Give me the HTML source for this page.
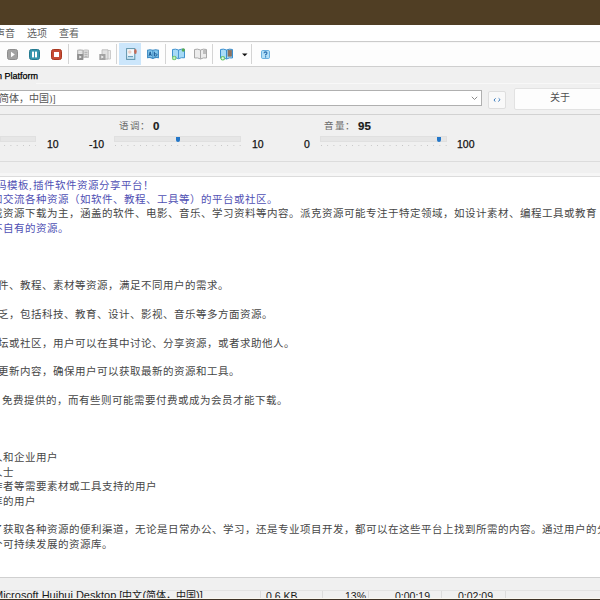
<!DOCTYPE html>
<html lang="zh-CN">
<head>
<meta charset="utf-8">
<style>
html,body{margin:0;padding:0;}
body{width:600px;height:600px;overflow:hidden;position:relative;background:#f0f0f0;font-family:"Liberation Sans",sans-serif;}
.a{position:absolute;}
#brown{left:0;top:0;width:600px;height:25px;background:#503e24;}
#menu{left:0;top:25px;width:600px;height:16px;background:#fff;}
.mi{position:absolute;top:2.5px;font-size:10px;line-height:12px;color:#606060;}
#tool{left:0;top:41px;width:600px;height:25px;background:#fdfdfd;border-bottom:1px solid #cfcfcf;}
.sep{position:absolute;top:3px;width:1px;height:20px;background:#d4d4d4;}
.ic{position:absolute;}
#tabrow{left:0;top:67px;width:600px;height:23px;background:#f0f0f0;}
#combo{left:-5px;top:90px;width:485px;height:14px;background:#fff;border:1px solid #b0b0b0;}
#ctrl{left:0;top:106px;width:600px;height:8px;background:#f0f0f0;border-bottom:1px solid #d2d2d2;}
.num{position:absolute;font-size:10.5px;line-height:12px;color:#111;-webkit-text-stroke:0.25px #111;}
.lbl{position:absolute;font-family:"Liberation Serif",serif;font-size:9.5px;letter-spacing:0.5px;line-height:12px;color:#6a6a6a;}
.bold{font-weight:bold;color:#1a1a1a;font-size:11.5px;-webkit-text-stroke:0.2px #1a1a1a;}
.track{position:absolute;top:136px;height:6px;background:#e6e6e6;box-shadow:inset 0 0 0 1px #e0e0e0;}
.ticks{position:absolute;top:145px;height:1px;background-image:linear-gradient(90deg,#c4c4c4 1px,transparent 1px);background-size:6.24px 1px;}
.thumb{position:absolute;top:137px;width:4px;height:5px;background:#2376c8;border-radius:0 0 2px 2px;}
#text{left:0;top:176px;width:600px;height:400px;background:#fff;border-top:1px solid #dcdcdc;}
.ln{position:absolute;font-family:"Liberation Serif",serif;font-size:10.5px;letter-spacing:1px;line-height:14px;white-space:pre;color:#464646;}
.b{color:#5050b4;}
#status{left:0;top:577px;width:600px;height:23px;background:#f0f0f0;border-top:1px solid #d0d0d0;}
.st{position:absolute;top:11px;font-size:10.5px;line-height:14px;color:#1a1a1a;white-space:pre;}
.ssep{position:absolute;top:13px;width:1px;height:8px;background:#dcdcdc;}
</style>
</head>
<body>
<div id="brown" class="a"></div>
<div id="menu" class="a">
  <div class="mi" style="left:-5px">声音</div>
  <div class="mi" style="left:27px">选项</div>
  <div class="mi" style="left:59px">查看</div>
</div>
<div id="tool" class="a">
  <!-- play -->
  <svg class="ic" style="left:7px;top:7.5px" width="11" height="11"><rect x="0.5" y="0.5" width="10" height="10" rx="2" fill="#a3a3a3" stroke="#8e8e8e"/><path d="M4 2.8 L7.8 5.5 L4 8.2Z" fill="#fff"/></svg>
  <!-- pause -->
  <svg class="ic" style="left:29px;top:7.5px" width="11" height="11"><rect x="0.5" y="0.5" width="10" height="10" rx="2" fill="#3595ad" stroke="#247a90"/><rect x="3" y="2.6" width="2" height="5.8" fill="#fff"/><rect x="6" y="2.6" width="2" height="5.8" fill="#fff"/></svg>
  <!-- stop -->
  <svg class="ic" style="left:51px;top:7.5px" width="11" height="11"><rect x="0.5" y="0.5" width="10" height="10" rx="2" fill="#c74a33" stroke="#a8371f"/><rect x="3" y="3" width="5" height="5" fill="#fff"/></svg>
  <div class="sep" style="left:68px"></div>
  <!-- doc play icons (gray) -->
  <svg class="ic" style="left:77px;top:8px" width="12" height="11"><path d="M6.5 1.2 Q9 0.6 11.5 1.2 V8.5 H6.5Z" fill="#dedede" stroke="#b4b4b4" stroke-width="0.8"/><path d="M7.5 3.3h3M7.5 5.3h3M7.5 7.3h3" stroke="#a5a5a5" stroke-width="0.9"/><path d="M0.5 1.2 Q3 0.5 6 1.2 V10.5 H0.5Z" fill="#d4d4d4" stroke="#a9a9a9" stroke-width="0.8"/><path d="M1.8 2.8h3M1.8 4.3h3" stroke="#f4f4f4" stroke-width="0.8"/><rect x="0.2" y="5" width="6" height="6" fill="#8f8f8f"/><path d="M2.3 6.4 L4.9 8 L2.3 9.6Z" fill="#f2f2f2"/></svg>
  <svg class="ic" style="left:99px;top:8px" width="12" height="11"><path d="M5.5 1.5 H11.5 V10 H5.5Z" fill="#ececec" stroke="#c2c2c2" stroke-width="0.8"/><path d="M3 0.8 H9 V10 H3Z" fill="#e2e2e2" stroke="#b6b6b6" stroke-width="0.8"/><rect x="0.3" y="5" width="6.2" height="6" fill="#a3a3a3"/><path d="M2.3 6.4 L4.9 8 L2.3 9.6Z" fill="#f4f4f4"/></svg>
  <div class="sep" style="left:116px"></div>
  <!-- highlighted button -->
  <div class="ic" style="left:119px;top:2px;width:22px;height:22px;background:#cce6fb;"></div>
  <svg class="ic" style="left:126px;top:7px" width="12" height="12"><defs><linearGradient id="dg" x1="0" y1="0" x2="0" y2="1"><stop offset="0" stop-color="#fbfdff"/><stop offset="0.55" stop-color="#eef6fb"/><stop offset="1" stop-color="#bfe2f5"/></linearGradient></defs><rect x="0.6" y="0.6" width="8.2" height="10.8" fill="url(#dg)" stroke="#5f93aa" stroke-width="1"/><circle cx="3.8" cy="4" r="1.7" fill="#ead0c6"/><path d="M2 8.6h5" stroke="#6b9fbd" stroke-width="1.2"/><ellipse cx="9.4" cy="3.6" rx="1.3" ry="2.5" fill="#c66a55"/></svg>
  <!-- blue book -->
  <svg class="ic" style="left:147px;top:8px" width="12" height="10"><path d="M0.6 1.2 Q3 0.3 5.8 1.3 Q8.6 0.3 11.4 1.2 V8.6 Q8.6 8 5.8 9.4 Q3 8 0.6 8.6Z" fill="#86c9ee" stroke="#3f8cc4" stroke-width="1.1"/><path d="M5.8 1.3 V9.2" stroke="#3f8cc4" stroke-width="0.9"/><path d="M2 7 L3.2 2.8 L4.3 7 M2.5 5.5h1.5" stroke="#1f5f98" stroke-width="1" fill="none"/><path d="M7.4 2.8 V7 H8.8 Q10 6.8 10 5.6 Q10 4.8 8.8 4.8 H7.4" stroke="#1f5f98" stroke-width="1" fill="none"/></svg>
  <div class="sep" style="left:165px"></div>
  <!-- book with green plus -->
  <svg class="ic" style="left:171px;top:7px" width="15" height="13"><path d="M1.5 1.5 Q4.5 0.6 7.5 2 Q10.5 0.6 13.5 1.5 V9.8 Q10.5 9.1 7.5 10.7 Q4.5 9.1 1.5 9.8Z" fill="#a6daf6" stroke="#3f92cf" stroke-width="1"/><path d="M7.5 2 V10.4" stroke="#3f92cf" stroke-width="0.9"/><circle cx="12.3" cy="2" r="1.7" fill="#55a856"/><circle cx="3.2" cy="10" r="2.3" fill="#6cc56c"/><path d="M3.2 8.6v2.8M1.8 10h2.8" stroke="#e9ffe9" stroke-width="0.8"/></svg>
  <!-- gray book -->
  <svg class="ic" style="left:194px;top:7px" width="14" height="12"><path d="M0.5 1.5 Q3.5 0.5 6.5 2 Q9.5 0.5 12.5 1.5 V10 Q9.5 9.3 6.5 11 Q3.5 9.3 0.5 10Z" fill="#ececec" stroke="#a8a8a8"/><path d="M6.5 2 V10.8" stroke="#a8a8a8"/><rect x="9" y="2" width="3" height="4" fill="#bdbdbd"/></svg>
  <div class="sep" style="left:212px"></div>
  <!-- book with brown and green plus -->
  <svg class="ic" style="left:220px;top:7px" width="14" height="13"><path d="M0.5 1.5 Q3.5 0.5 6.5 2 Q9.5 0.5 12.5 1.5 V10 Q9.5 9.3 6.5 11 Q3.5 9.3 0.5 10Z" fill="#a9dcf7" stroke="#3a8fd0"/><path d="M6.5 2 V10.8" stroke="#3a8fd0"/><rect x="8" y="2.2" width="3.6" height="6" fill="#94725c" stroke="#7a7068" stroke-width="0.7"/><circle cx="2.8" cy="10.2" r="2.3" fill="#62c262"/><path d="M2.8 8.8v2.8M1.4 10.2h2.8" stroke="#fff" stroke-width="0.9"/></svg>
  <svg class="ic" style="left:241.5px;top:11.8px" width="6" height="4"><path d="M0 0.5 H5.5 L2.75 3.2Z" fill="#111"/></svg>
  <div class="sep" style="left:251px"></div>
  <!-- help -->
  <svg class="ic" style="left:261px;top:9px" width="9" height="9"><rect x="0.5" y="0.5" width="8" height="8" rx="1.2" fill="#b3e0f8" stroke="#5ea8dc" stroke-width="0.9"/><path d="M3 3.3 Q3.1 1.9 4.6 1.9 Q6.1 2 5.9 3.3 Q5.7 4.1 4.6 4.7 V5.6" stroke="#2a6eae" stroke-width="1.1" fill="none"/><rect x="4" y="6.3" width="1.2" height="1.2" fill="#2a6eae"/></svg>
</div>
<div class="a" style="left:0;top:41px;width:600px;height:1px;background:#cbcbcb"></div>
<div class="a" style="left:0;top:42px;width:600px;height:1px;background:#f7f7f7"></div>
<div id="tabrow" class="a">
  <div class="a" style="left:-3px;top:3px;font-size:9px;line-height:12px;color:#000;white-space:pre;-webkit-text-stroke:0.25px #000">n Platform</div>
  <div class="a" style="left:36px;top:16px;width:564px;height:1px;background:#f8f8f8"></div>
</div>
<div id="combo" class="a">
  <div class="a" style="left:3px;top:2px;font-family:'Liberation Serif',serif;font-size:10px;line-height:12px;color:#555;white-space:pre">简体，中国)]</div>
</div>
<div id="ctrl" class="a"></div>
<svg class="a" style="left:471px;top:95.5px" width="7" height="5"><path d="M0.8 0.8 L3.5 3.5 L6.2 0.8" stroke="#8c8c8c" stroke-width="1" fill="none"/></svg>
<div class="a" style="left:488px;top:91px;width:16px;height:16px;background:#f9f9f9;border:1px solid #dedede;border-radius:2px;"></div>
<svg class="a" style="left:493px;top:97px" width="8" height="6"><path d="M2.6 1.3 L1 3 L2.2 4.6" stroke="#3c7dbf" stroke-width="1" fill="none"/><path d="M5.6 1.3 L7 2.6 L5.4 4.6" stroke="#3c7dbf" stroke-width="1" fill="none"/></svg>
<div class="a" style="left:514px;top:87.5px;width:90px;height:20px;background:#fdfdfd;border:1px solid #e2e2e2;border-radius:2px;"></div>
<div class="a" style="left:550px;top:92px;font-size:10px;line-height:12px;color:#505050;">关于</div>

<div class="a" style="left:0;top:115px;width:600px;height:46px;border-bottom:1px solid #dcdcdc;"></div>
<div class="lbl" style="left:119px;top:120px">语调：</div>
<div class="num bold" style="left:153px;top:120px">0</div>
<div class="lbl" style="left:324px;top:120px">音量：</div>
<div class="num bold" style="left:358px;top:120px">95</div>

<div class="track" style="left:0;width:36px"></div>
<div class="ticks" style="left:-2px;width:38px"></div>
<div class="num" style="left:47px;top:138px">10</div>
<div class="num" style="left:89px;top:138px">-10</div>
<div class="track" style="left:114px;width:127px"></div>
<div class="ticks" style="left:115px;width:126px"></div>
<div class="thumb" style="left:176px"></div>
<div class="num" style="left:252px;top:138px">10</div>
<div class="num" style="left:304px;top:138px">0</div>
<div class="track" style="left:320px;width:127px"></div>
<div class="ticks" style="left:321px;width:126px"></div>
<div class="thumb" style="left:437px"></div>
<div class="num" style="left:457px;top:138px">100</div>

<div class="a" style="left:0;top:173px;width:600px;height:3px;background:#f6f6f6"></div>
<div id="text" class="a"></div>
<div class="ln b" style="left:-4px;top:178.60px">码模板,插件软件资源分享平台！</div>
<div class="ln b" style="left:-8px;top:192.96px">和交流各种资源（如软件、教程、工具等）的平台或社区。</div>
<div class="ln" style="left:-8px;top:207.32px">载资源下载为主，涵盖的软件、电影、音乐、学习资料等内容。派克资源可能专注于特定领域，如设计素材、编程工具或教育</div>
<div class="ln b" style="left:-8px;top:221.68px">不自有的资源。</div>
<div class="ln" style="left:-2px;top:279.12px">件、教程、素材等资源，满足不同用户的需求。</div>
<div class="ln" style="left:-2px;top:307.84px">乏，包括科技、教育、设计、影视、音乐等多方面资源。</div>
<div class="ln" style="left:-2px;top:336.56px">坛或社区，用户可以在其中讨论、分享资源，或者求助他人。</div>
<div class="ln" style="left:-2px;top:365.28px">更新内容，确保用户可以获取最新的资源和工具。</div>
<div class="ln" style="left:-9px;top:394.00px">，免费提供的，而有些则可能需要付费或成为会员才能下载。</div>
<div class="ln" style="left:-8px;top:451.44px">人和企业用户</div>
<div class="ln" style="left:-8px;top:465.80px">人士</div>
<div class="ln" style="left:-8px;top:480.16px">作者等需要素材或工具支持的用户</div>
<div class="ln" style="left:-8px;top:494.52px">库的用户</div>
<div class="ln" style="left:-8px;top:523.24px">了获取各种资源的便利渠道，无论是日常办公、学习，还是专业项目开发，都可以在这些平台上找到所需的内容。通过用户的分</div>
<div class="ln" style="left:-8px;top:537.60px">个可持续发展的资源库。</div>

<div id="status" class="a">
  <div class="a" style="left:0;top:12px;width:600px;height:1px;background:#e3e3e3"></div>
  <div class="st" style="left:-6px;top:10px;font-size:11px">Microsoft Huihui Desktop [<span style="font-size:10px">中文</span>(<span style="font-size:10px">简体，中国</span>)]</div>
  <div class="ssep" style="left:260px"></div>
  <div class="st" style="left:266px">0.6 KB</div>
  <div class="ssep" style="left:322px"></div>
  <div class="st" style="left:345px">13%</div>
  <div class="ssep" style="left:368px"></div>
  <div class="st" style="left:395px">0:00:19</div>
  <div class="ssep" style="left:441px"></div>
  <div class="st" style="left:458px">0:02:09</div>
  <div class="ssep" style="left:505px"></div>
  <div class="a" style="left:0;top:20px;width:600px;height:1px;background:#faf7f0"></div>
  <div class="a" style="left:0;top:21px;width:600px;height:1px;background:#3f3428"></div>
</div>
</body>
</html>
